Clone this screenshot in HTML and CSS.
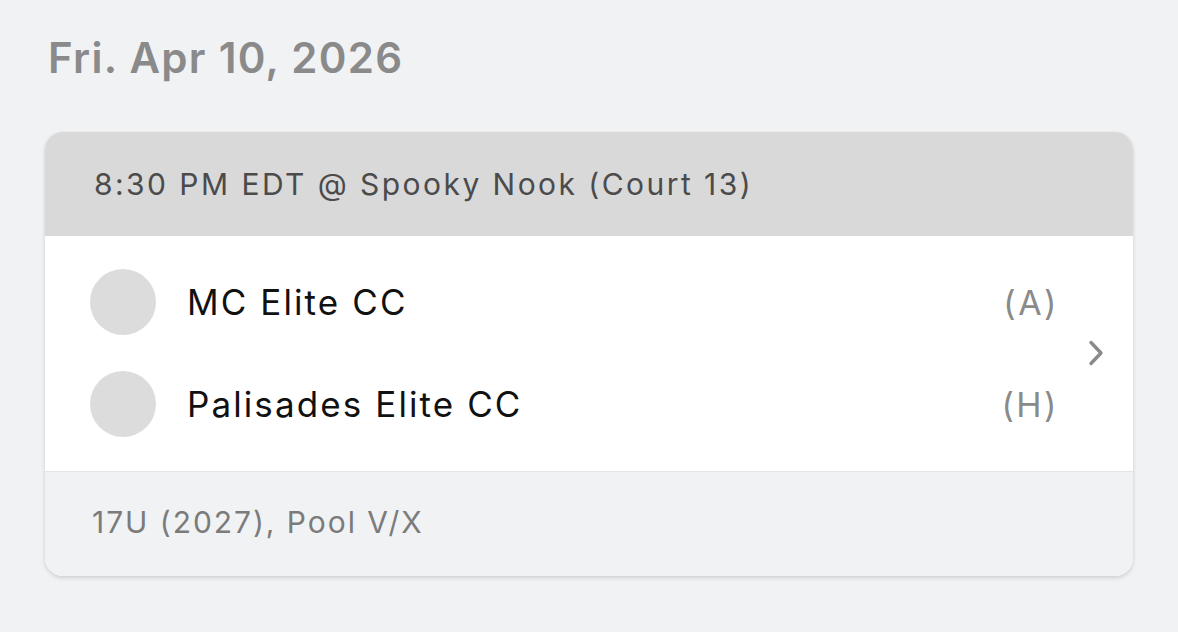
FILE: index.html
```html
<!DOCTYPE html>
<html lang="en">
<head>
    <meta charset="UTF-8">
    <meta name="viewport" content="width=device-width, initial-scale=1.0">
    <title>Schedule</title>
    <link rel="stylesheet" href="styles.css">
</head>
<body>
    <div class="page">
        <h1 class="day-title">Fri. Apr 10, 2026</h1>

        <div class="match-card">
            <div class="match-header">8:30 PM EDT @ Spooky Nook (Court 13)</div>
            <div class="match-body">
                <div class="teams">
                    <div class="team-row">
                        <span class="team-logo"></span>
                        <span class="team-name">MC Elite CC</span>
                        <span class="team-side">(A)</span>
                    </div>
                    <div class="team-row">
                        <span class="team-logo"></span>
                        <span class="team-name">Palisades Elite CC</span>
                        <span class="team-side">(H)</span>
                    </div>
                </div>
                <svg class="chevron" width="20" height="28" viewBox="0 0 20 28">
                    <path d="M5 3.5 L15 14 L5 24.5" fill="none" stroke="#8a8a8a" stroke-width="3.4" stroke-linecap="round" stroke-linejoin="round"/>
                </svg>
            </div>
            <div class="match-footer">17U (2027), Pool V/X</div>
        </div>
    </div>
</body>
</html>
```

FILE: styles.css
```css
:root {
    --page-bg: #f1f2f4;
    --header-bg: #d9d9d9;
    --muted: #8a8a8a;
    --text-dark: #4b4b4b;
}

* {
    box-sizing: border-box;
    margin: 0;
    padding: 0;
}

body {
    font-family: Inter, "Open Sans", sans-serif;
    background-color: var(--page-bg);
    color: #111;
}

.page {
    padding: 26px 45px 40px 45px;
}

.day-title {
    font-size: 42px;
    font-weight: 600;
    letter-spacing: 1.3px;
    color: var(--muted);
    line-height: 64px;
    padding-left: 3px;
    margin-bottom: 42px;
}

.match-card {
    background-color: white;
    border-radius: 18px;
    overflow: hidden;
    box-shadow: 0 2px 4px rgba(0,0,0,0.14), 0 0 1px rgba(0,0,0,0.1);
}

.match-header {
    background-color: var(--header-bg);
    height: 104px;
    display: flex;
    align-items: center;
    padding-left: 49px;
    font-size: 30px;
    letter-spacing: 2.45px;
    color: var(--text-dark);
}

.match-body {
    display: flex;
    align-items: center;
    padding: 33px 27px 34px 45px;
}

.teams {
    flex: 1;
    display: flex;
    flex-direction: column;
    gap: 36px;
}

.team-row {
    display: flex;
    align-items: center;
    height: 66px;
}

.team-logo {
    width: 66px;
    height: 66px;
    border-radius: 50%;
    background-color: #dcdcdc;
    margin-right: 31px;
}

.team-name {
    flex: 1;
    font-size: 35px;
    letter-spacing: 2.1px;
    color: #111;
}

.team-side {
    font-size: 34px;
    letter-spacing: 2.5px;
    color: var(--muted);
    margin-right: 27px;
}

.chevron {
    display: block;
}

.match-footer {
    background-color: var(--page-bg);
    border-top: 1px solid #e4e5e7;
    height: 105px;
    display: flex;
    align-items: center;
    padding-left: 47px;
    padding-bottom: 4px;
    font-size: 30px;
    letter-spacing: 1.95px;
    color: #7b7b7b;
}
```
